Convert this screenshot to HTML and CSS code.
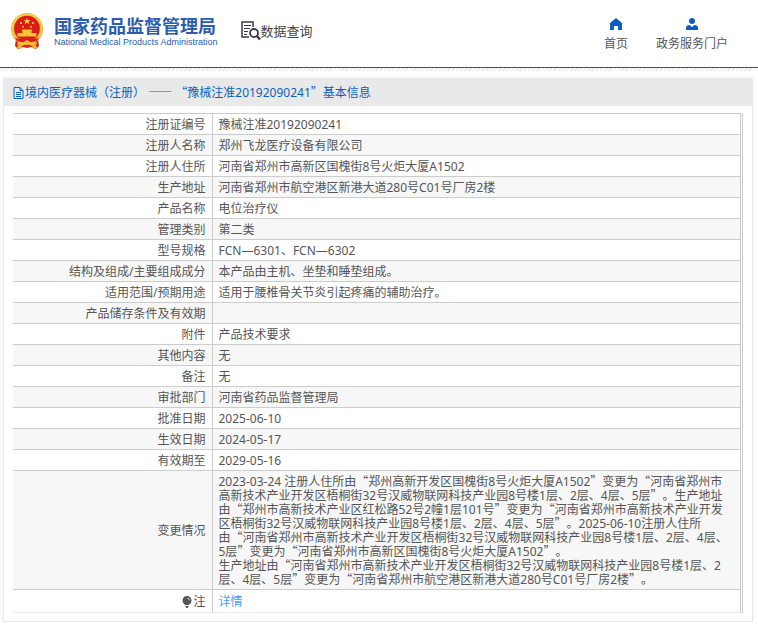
FILE: index.html
```html
<!DOCTYPE html>
<html lang="zh-CN">
<head>
<meta charset="utf-8">
<title>数据查询</title>
<link rel="stylesheet" href="styles.css">
</head>
<body>
<header class="top">
  <div class="brand">
    <svg class="emblem" viewBox="0 0 34 38" aria-hidden="true">
      <path d="M6 27h22l1 7-3 3-5-2-4 1-4-1-5 2-3-3z" fill="#d3231c"/>
      <circle cx="17" cy="17" r="16" fill="#e8b232"/>
      <circle cx="17" cy="17" r="14.500" fill="none" stroke="#f7d04a" stroke-width="1.500"/>
      <circle cx="17" cy="16.500" r="12.800" fill="#dc1a18"/>
      <path d="M17 6l1 2.300h2.400l-1.900 1.500.8 2.400-2.300-1.500-2.300 1.500.8-2.400-1.900-1.500H16z" fill="#f8cf35"/>
      <path d="M10 10h2v2h-2zM22 10h2v2h-2zM12 14h2v1.500h-2zM20 14h2v1.500h-2z" fill="#f3b72b"/>
      <path d="M12.500 17.500h9l1 1.500h-1v2h5v3.500h-19V21h5v-2h-1z" fill="#f8c62d"/>
      <path d="M5 26q12 3 24 0l-2 3q-10 3-20 0z" fill="#d3231c"/>
      <path d="M7 30q4 2 7 0l3-2 3 2q3 2 7 0l-1 3q-4 2-6 0l-3-2-3 2q-2 2-6 0z" fill="#f1bd35"/>
      <path d="M8 33l5 2-3 2-3-1zM26 33l-5 2 3 2 3-1z" fill="#ecb63b"/>
    </svg>
    <div class="names">
      <span class="name-cn">国家药品监督管理局</span>
      <span class="name-en">National Medical Products Administration</span>
    </div>
  </div>
  <div class="section">
    <svg class="search-icon" viewBox="0 0 20 20" aria-hidden="true" fill="none" stroke="#3b3948">
      <path d="M12 6V1H1v15h7" stroke-width="1.500"/>
      <path d="M3 4.500h7M3 7.500h6M3 10.500h4M3 13.500h3" stroke-width="1.200"/>
      <circle cx="13" cy="12" r="4" stroke-width="1.800"/>
      <path d="M16 15l3 3.500" stroke-width="2.500"/>
    </svg>
    <span>数据查询</span>
  </div>
  <nav class="nav">
    <a href="#home"><svg viewBox="0 0 12 12" aria-hidden="true"><path d="M6 0l6 5v7H8V8H4v4H0V5z"/></svg>首页</a>
    <a href="#portal"><svg viewBox="0 0 12 12" aria-hidden="true"><circle cx="6" cy="3" r="3"/><path d="M0 12V10q0-3 3.500-3L6 9l2.500-2Q12 7 12 10v2z"/></svg>政务服务门户</a>
  </nav>
</header>
<main class="panel">
  <h1 class="title">
    <svg viewBox="0 0 11 12" aria-hidden="true" fill="none" stroke="#0b5fbd"><path d="M1 .5h6l3 3v8H1zM7 .5v3h3M3 5.500h5M3 7.500h5M3 9.500h5"/></svg>
    <span>境内医疗器械（注册） <span class="cjk">——</span> <span class="cjk">“</span>豫械注准20192090241<span class="cjk">”</span>基本信息</span>
  </h1>
  <div class="body">
  <table class="info">
    <tbody>
    <tr><th scope="row">注册证编号</th><td>豫械注准20192090241</td></tr>
    <tr><th scope="row">注册人名称</th><td>郑州飞龙医疗设备有限公司</td></tr>
    <tr><th scope="row">注册人住所</th><td>河南省郑州市高新区国槐街8号火炬大厦A1502</td></tr>
    <tr><th scope="row">生产地址</th><td>河南省郑州市航空港区新港大道280号C01号厂房2楼</td></tr>
    <tr><th scope="row">产品名称</th><td>电位治疗仪</td></tr>
    <tr><th scope="row">管理类别</th><td>第二类</td></tr>
    <tr><th scope="row">型号规格</th><td>FCN—6301、FCN—6302</td></tr>
    <tr><th scope="row">结构及组成/主要组成成分</th><td>本产品由主机、坐垫和睡垫组成。</td></tr>
    <tr><th scope="row">适用范围/预期用途</th><td>适用于腰椎骨关节炎引起疼痛的辅助治疗。</td></tr>
    <tr><th scope="row">产品储存条件及有效期</th><td></td></tr>
    <tr><th scope="row">附件</th><td>产品技术要求</td></tr>
    <tr><th scope="row">其他内容</th><td>无</td></tr>
    <tr><th scope="row">备注</th><td>无</td></tr>
    <tr><th scope="row">审批部门</th><td>河南省药品监督管理局</td></tr>
    <tr><th scope="row">批准日期</th><td>2025-06-10</td></tr>
    <tr><th scope="row">生效日期</th><td>2024-05-17</td></tr>
    <tr><th scope="row">有效期至</th><td>2029-05-16</td></tr>
    <tr class="changes"><th scope="row">变更情况</th><td>2023-03-24 注册人住所由<span class="cjk">“</span>郑州高新开发区国槐街8号火炬大厦A1502<span class="cjk">”</span>变更为<span class="cjk">“</span>河南省郑州市<wbr>高新技术产业开发区梧桐街32号汉威物联网科技产业园8号楼1层、2层、4层、5层<span class="cjk">”</span>。生产地址<br>由<span class="cjk">“</span>郑州市高新技术产业区红松路52号2幢1层101号<span class="cjk">”</span>变更为<span class="cjk">“</span>河南省郑州市高新技术产业开发<br>区梧桐街32号汉威物联网科技产业园8号楼1层、2层、4层、5层<span class="cjk">”</span>。2025-06-10注册人住所<br>由<span class="cjk">“</span>河南省郑州市高新技术产业开发区梧桐街32号汉威物联网科技产业园8号楼1层、2层、4层、<br>5层<span class="cjk">”</span>变更为<span class="cjk">“</span>河南省郑州市高新区国槐街8号火炬大厦A1502<span class="cjk">”</span>。<br>生产地址由<span class="cjk">“</span>河南省郑州市高新技术产业开发区梧桐街32号汉威物联网科技产业园8号楼1层、2<br>层、4层、5层<span class="cjk">”</span>变更为<span class="cjk">“</span>河南省郑州市航空港区新港大道280号C01号厂房2楼<span class="cjk">”</span>。</td></tr>
    <tr class="note"><th scope="row"><svg viewBox="0 0 10 12" aria-hidden="true"><path d="M5 0a4.500 4.500 0 0 1 2.500 8.200L7 9H3l-.5-.8A4.500 4.500 0 0 1 5 0zM3.500 10h3v1l-1 1h-1l-1-1z" fill="#555"/><path d="M5.500 2q2 .3 2 2.300" fill="none" stroke="#fff" stroke-width=".8"/></svg>注</th><td><a href="#detail">详情</a></td></tr>
    </tbody>
  </table>
  </div>
</main>
</body>
</html>
```
FILE: styles.css
```css
* { box-sizing: border-box; }
body {
  margin: 0;
  background: #fff;
  color: #555;
  font: 12px/14px "Noto Sans", "Noto Sans CJK SC", sans-serif;
  text-spacing-trim: space-all;
}
a { color: inherit; text-decoration: none; }
.cjk { font-family: "Noto Sans CJK SC", sans-serif; line-height: 1px; }
.top {
  display: flex;
  align-items: center;
  height: 71px;
  padding: 0 30px 9px 10px;
  background:
    linear-gradient(#0b5fb5, #0b5fb5) 0 67px / 100% 1px no-repeat,
    repeating-linear-gradient(135deg, #e4e4e4 0 1px, #fff 1px 3px) 0 68px / 100% 3px no-repeat;
}
.brand { display: flex; align-items: center; gap: 10px; }
.emblem { width: 34px; height: 38px; }
.names { display: flex; flex-direction: column; color: #2b5cb0; white-space: nowrap; }
.name-cn { font: bold 18px/22px "Noto Sans CJK SC", sans-serif; }
.name-en { font: 9px/12px "Liberation Sans", sans-serif; }
.section {
  display: flex;
  align-items: center;
  margin-left: 23px;
  color: #444;
  font-size: 13px;
  white-space: nowrap;
}
.search-icon { width: 20px; height: 20px; }
.nav { display: flex; gap: 28px; margin-left: auto; padding-top: 6px; }
.nav a { display: flex; flex-direction: column; align-items: center; gap: 7px; white-space: nowrap; }
.nav svg { width: 12px; height: 12px; fill: #0b5fc0; }
.panel {
  margin: 7px 5px 0 3px;
  border: 1px solid #e9e9e9;
  box-shadow: 0 0 4px #eee;
}
.title {
  display: flex;
  align-items: center;
  gap: 1px;
  margin: 0;
  height: 27px;
  padding-left: 9px;
  background: #e9e9e9;
  color: #0b5fbd;
  font-size: 12px;
  font-weight: normal;
}
.title svg { width: 11px; height: 12px; }
.body { margin: 7px 9px 8px; border-right: 1px solid #ccc; padding-right: 1px; }
.info { width: 100%; border-collapse: collapse; table-layout: fixed; }
.info th, .info td {
  height: 21px;
  padding: 4px 6px 2px;
  border-top: 1px solid #ccc;
  border-right: 1px solid #ccc;
  font-weight: normal;
  text-align: left;
  vertical-align: middle;
}
.info th { width: 199px; text-align: right; }
.info tr:nth-child(even) { background: #f7f7f7; }
.info .note { border-bottom: 1px solid #e6ebf5; }
.info .note th, .info .note td { height: 23px; }
.note svg { width: 10px; height: 12px; margin-right: 1px; vertical-align: -2px; }
.note a { color: #409eff; }
```
